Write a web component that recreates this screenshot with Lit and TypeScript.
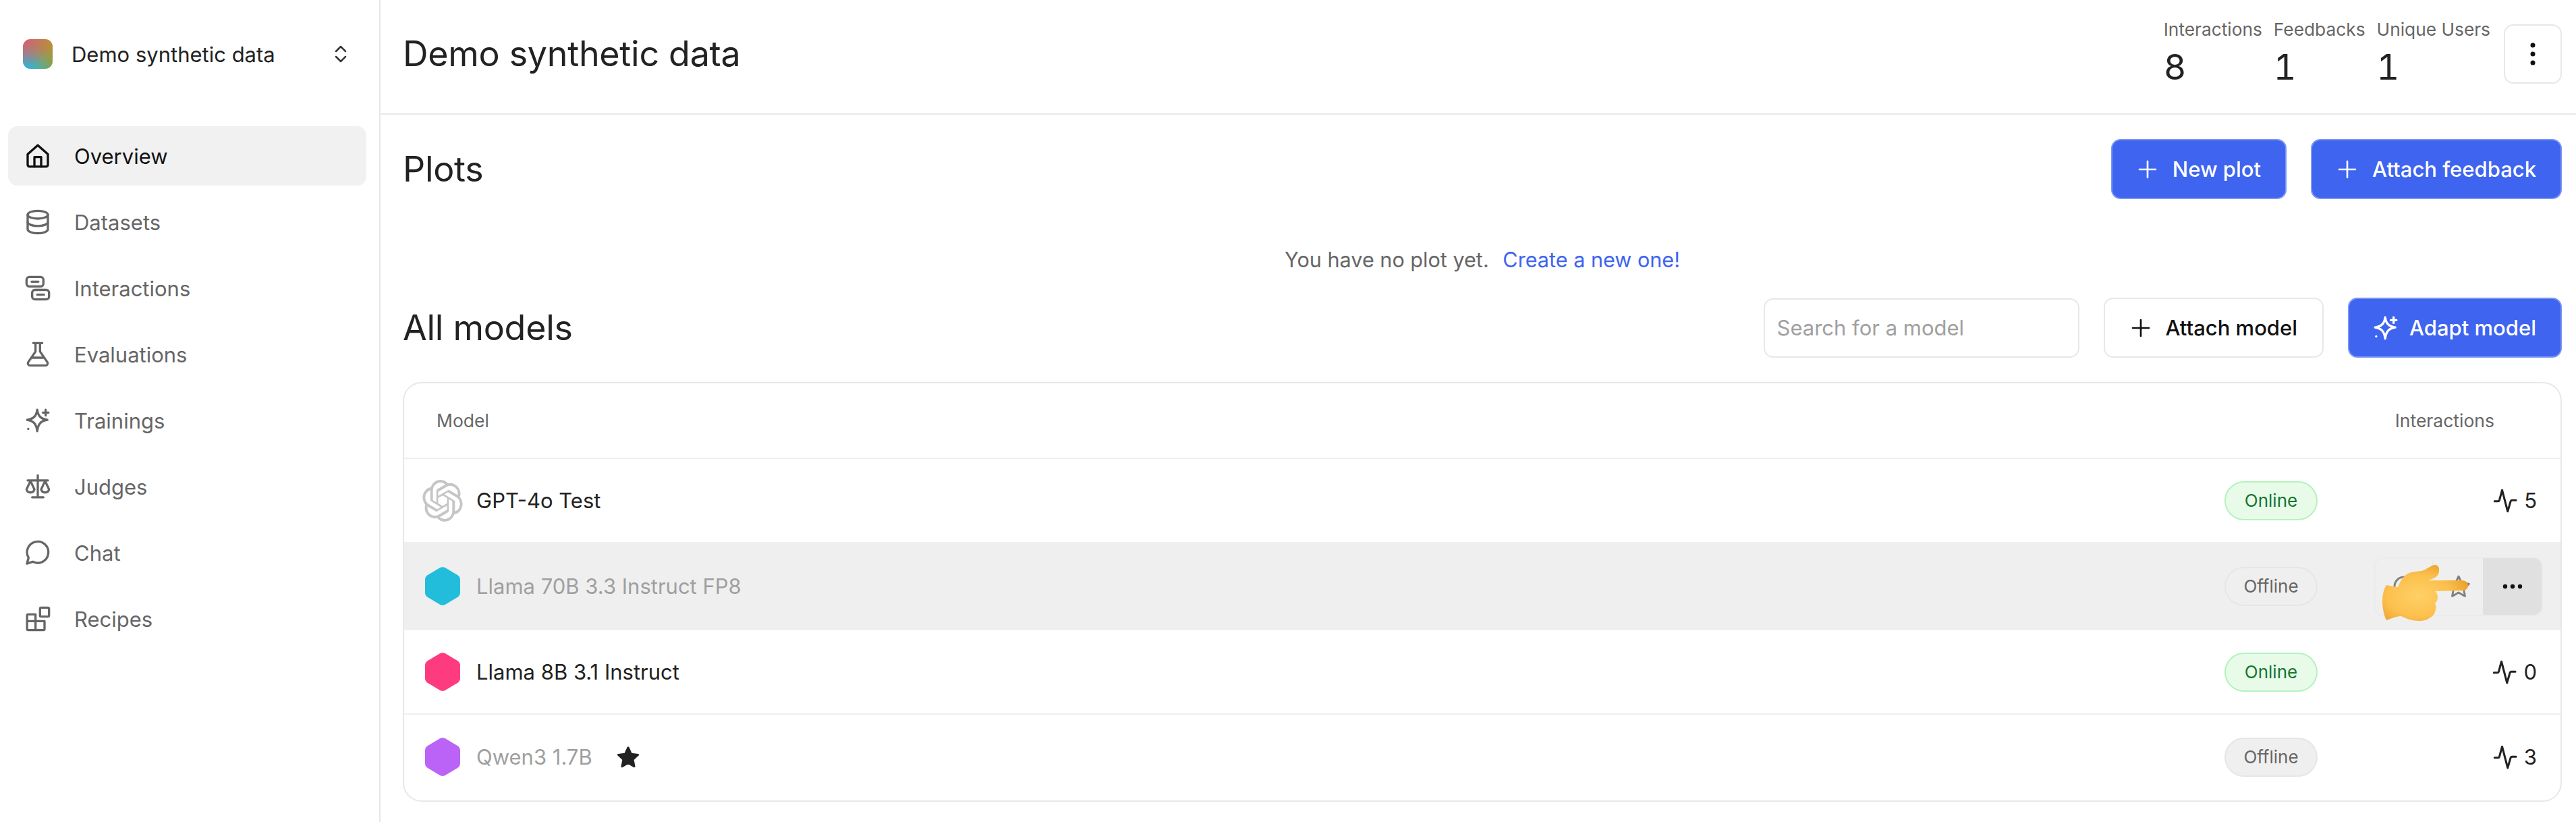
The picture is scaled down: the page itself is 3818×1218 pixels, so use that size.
import { LitElement, html, css, svg } from "lit";
import { customElement } from "lit/decorators.js";

const ic = (body: unknown, cls = "ic") => html`<svg class=${cls} viewBox="0 0 24 24" fill="none" stroke="currentColor" stroke-width="2" stroke-linecap="round" stroke-linejoin="round">${body}</svg>`;

const icons: Record<string, unknown> = {
  home: svg`<path d="M3 10.500 12 2.500l9 8V20a1.500 1.500 0 0 1-1.500 1.500h-15A1.500 1.500 0 0 1 3 20z"/><path d="M9 21.500V13h6v8.500"/>`,
  db: svg`<ellipse cx="12" cy="5.500" rx="9" ry="3.500"/><path d="M3 5.500v13c0 1.900 4 3.500 9 3.500s9-1.600 9-3.500v-13"/><path d="M3 12c0 1.900 4 3.500 9 3.500s9-1.600 9-3.500"/>`,
  inter: svg`<rect x="2" y="2" width="15" height="8.500" rx="2.500"/><rect x="7" y="13.500" width="15" height="8.500" rx="2.500"/><path d="M6.500 6.200h6M11.500 17.800h6"/>`,
  flask: svg`<path d="M8 2h8M10 2v7.500L3.500 19a2 2 0 0 0 1.700 3h13.600a2 2 0 0 0 1.700-3L14 9.500V2"/><path d="M7 15h10"/>`,
  spark: svg`<path d="M11.500 2.500c.8 5.500 3 8 9 9-6 1-8.200 3.500-9 10-.8-6.500-3-9-9-10 6-1 8.200-3.500 9-9z"/><path d="M19 2.500v5M16.500 5h5"/><path d="M3.500 19.500h.01"/>`,
  scale: svg`<path d="M12 2v19M7 21.500h10M3 6.500h18"/><path d="M5.500 7 2 14.500a3.600 3.600 0 0 0 7 0z"/><path d="M18.500 7 15 14.500a3.600 3.600 0 0 0 7 0z"/>`,
  chat: svg`<path d="M7.500 20A9.500 9.500 0 1 0 3.800 16.500L2.300 21.700z"/>`,
  blocks: svg`<rect x="14" y="2" width="8" height="8" rx="1"/><path d="M10 22V8H3.500A1 1 0 0 0 2.500 9v12a1 1 0 0 0 1 1H17a1 1 0 0 0 1-1V14H2.500"/>`,
  plus: svg`<path d="M12 3v18M3 12h18"/>`,
  pulse: svg`<path d="M1.500 12.500H5c.6 0 1.100-.4 1.300-1L9 1.500l5.500 21 3-10.200c.2-.5.600-.8 1.200-.8h4"/>`,
};

const nav = [
  ["Overview", "home"], ["Datasets", "db"], ["Interactions", "inter"], ["Evaluations", "flask"],
  ["Trainings", "spark"], ["Judges", "scale"], ["Chat", "chat"], ["Recipes", "blocks"],
];

const hex = (color: string) => html`<svg class="hex" viewBox="0 0 52 56" preserveAspectRatio="none"><path fill=${color} d="M22 1.300a8 8 0 0 1 8 0l18 10.500a8 8 0 0 1 4 6.900v18.600a8 8 0 0 1-4 6.900L30 54.700a8 8 0 0 1-8 0L4 44.200a8 8 0 0 1-4-6.900V18.700a8 8 0 0 1 4-6.900z"/></svg>`;

const openai = html`<svg class="oai" viewBox="0 0 24 24" preserveAspectRatio="none"><path fill="#c6c6c6" d="M22.280 9.820a5.980 5.980 0 0 0-.520-4.910 6.050 6.050 0 0 0-6.510-2.900A6.070 6.070 0 0 0 4.980 4.180a5.980 5.980 0 0 0-4 2.900 6.050 6.050 0 0 0 .750 7.100 5.980 5.980 0 0 0 .510 4.910 6.050 6.050 0 0 0 6.520 2.900A5.980 5.980 0 0 0 13.260 24a6.060 6.060 0 0 0 5.770-4.210 5.990 5.990 0 0 0 4-2.900 6.060 6.060 0 0 0-.750-7.070zM13.260 22.430a4.480 4.480 0 0 1-2.880-1.040l.140-.080 4.780-2.760a.79.79 0 0 0 .390-.680v-6.740l2.020 1.170a.07.07 0 0 1 .040.050v5.580a4.500 4.500 0 0 1-4.490 4.500zM3.600 18.300a4.470 4.470 0 0 1-.540-3.010l.140.090 4.780 2.760a.77.770 0 0 0 .780 0l5.840-3.370v2.330a.08.080 0 0 1-.030.060L9.740 19.950a4.500 4.500 0 0 1-6.140-1.650zM2.340 7.900a4.490 4.490 0 0 1 2.370-1.970V11.600a.77.770 0 0 0 .390.680l5.810 3.350-2.020 1.170a.08.080 0 0 1-.070 0l-4.830-2.790A4.500 4.500 0 0 1 2.340 7.870zm16.600 3.860L13.100 8.360 15.120 7.200a.08.080 0 0 1 .070 0l4.830 2.790a4.490 4.490 0 0 1-.680 8.100v-5.680a.79.79 0 0 0-.400-.670zm2.010-3.020-.140-.090-4.770-2.780a.78.780 0 0 0-.790 0L9.410 9.230V6.900a.07.070 0 0 1 .030-.060l4.830-2.790a4.500 4.500 0 0 1 6.680 4.660zM8.310 12.860l-2.020-1.160a.08.080 0 0 1-.040-.060V6.070a4.500 4.500 0 0 1 7.370-3.450l-.140.080L8.700 5.460a.79.790 0 0 0-.390.680zm1.100-2.370 2.600-1.500 2.610 1.500v3l-2.600 1.500-2.610-1.500z"/></svg>`;

const models = [
  { name: "GPT-4o Test", icon: openai, online: true, n: 5, dim: false, hover: false, star: false },
  { name: "Llama 70B 3.3 Instruct FP8", icon: hex("#22bddb"), online: false, n: 0, dim: true, hover: true, star: false },
  { name: "Llama 8B 3.1 Instruct", icon: hex("#ff3b7f"), online: true, n: 0, dim: false, hover: false, star: false },
  { name: "Qwen3 1.7B", icon: hex("#bb62f7"), online: false, n: 3, dim: true, hover: false, star: true },
];

const starPath = svg`<path d="M12 2.500l2.900 6.300 6.800.8-5 4.700 1.300 6.800-6-3.400-6 3.400 1.300-6.800-5-4.700 6.800-.8z"/>`;

@customElement("app-root")
export class AppRoot extends LitElement {
  static styles = css`
    :host { display: block; height: 1218px; font-family: Inter, "Noto Sans", sans-serif; color: #222; background: #fff; overflow: hidden; }
    * { box-sizing: border-box; }
    .app { display: flex; height: 1218px; }
    .side { width: 564px; flex: none; border-right: 2px solid #e8e8e8; padding: 0 19px 0 12px; }
    .brand { display: flex; align-items: center; height: 160px; padding: 0 26px 0 22px; font-size: 31px; }
    .logo { width: 44px; height: 44px; border-radius: 11px; margin-right: 28px; background: radial-gradient(circle at 0 0,#e05a6e,transparent 70%), radial-gradient(circle at 100% 0,#c28e2c,transparent 70%), radial-gradient(circle at 0 100%,#1cb9ee,transparent 70%), radial-gradient(circle at 100% 100%,#7ea54c,transparent 70%), #8c9a70; }
    .brand span { flex: 1; }
    .chev { width: 24px; height: 32px; color: #333; }
    .nav { display: flex; flex-direction: column; gap: 10px; margin-top: 27px; }
    .nav a { display: flex; align-items: center; gap: 34px; height: 88px; padding-left: 24px; border-radius: 14px; color: #666; font-size: 31px; }
    .nav a.on { background: #f1f1f1; color: #111; }
    .ic { width: 40px; height: 40px; flex: none; }
    .main { flex: 1; min-width: 0; }
    .top { display: flex; align-items: center; height: 170px; border-bottom: 2px solid #e8e8e8; padding: 0 21px 9px 33px; }
    .top h1, .bar h2 { font-weight: 400; margin: 0; font-size: 52px; flex: 1; letter-spacing: -.3px; }
    .stats { display: flex; gap: 17px; margin-right: 20px; }
    .stat small { display: block; font-size: 26.300px; color: #666; line-height: 32px; }
    .stat b { display: block; font-weight: 400; font-size: 52px; line-height: 62px; margin-top: 9px; font-variant-numeric: tabular-nums; }
    .kebab { width: 86px; height: 88px; border: 2px solid #e8e8e8; border-radius: 14px; display: grid; place-items: center; }
    .content { padding: 0 21px 0 33px; }
    .bar { display: flex; align-items: center; gap: 36px; height: 89px; }
    .bar.plots { margin-top: 36px; }
    .btn { display: inline-flex; align-items: center; justify-content: center; gap: 21px; height: 89px; padding: 0 36px; border-radius: 14px; font-size: 31px; font-weight: 500; background: #3e64f0; color: #fff; border: 2px solid #7a95f5; white-space: nowrap; }
    .btn.white { background: #fff; color: #111; border-color: #e8e8e8; padding: 0 37px; }
    .btn .ic { width: 32px; height: 32px; }
    .btn .ic.sp { width: 40px; height: 40px; margin: 0 -6px 0 -2px; }
    .empty { text-align: center; font-size: 30.600px; color: #666; margin: 72px 0 0; line-height: 36px; }
    .empty a { color: #3e64f0; margin-left: 12px; }
    .search { width: 468px; height: 88px; border: 2px solid #e8e8e8; border-radius: 14px; padding: 0 18px; display: flex; align-items: center; color: #a0a0a0; font-size: 31px; }
    .models { margin-top: 38px; }
    .table { margin-top: 36px; border: 2px solid #e8e8e8; border-radius: 28px; overflow: hidden; height: 622px; }
    .thead { display: flex; justify-content: space-between; align-items: center; height: 112px; padding: 0 98px 0 48px; font-size: 26.500px; color: #666; border-bottom: 2px solid #efefef; }
    .row { display: flex; align-items: center; height: 125px; padding: 0 26px 0 27px; font-size: 31px; border-bottom: 2px solid #efefef; }
    .row:last-child { border-bottom: 0; }
    .row.hover { background: #efefef; border-color: #efefef; height: 129px; position: relative; }
    .row.dim .name { color: #9f9f9f; }
    .name { margin-left: 20px; }
    .lead { width: 60px; display: grid; place-items: center; flex: none; }
    .hex { width: 52px; height: 57px; display: block; }
    .oai { width: 60px; height: 62px; display: block; }
    .star { width: 36px; height: 36px; margin-left: 35px; color: #222; }
    .pill { margin-left: auto; width: 138px; height: 58px; border-radius: 29px; display: grid; place-items: center; font-size: 26px; border: 2px solid #b5f2bd; background: #e8fbe9; color: #16752f; }
    .pill.off { background: transparent; border-color: #e6e6e6; color: #666; }
    .row:last-child .pill.off { background: #efefef; }
    .count { width: 334px; flex: none; display: flex; align-items: center; justify-content: flex-end; gap: 10px; font-size: 31px; padding-right: 9px; }
    .count svg { width: 36px; height: 36px; }
    .actions { width: 334px; flex: none; display: flex; justify-content: flex-end; }
    .grp { display: flex; width: 250px; height: 88px; border: 2px solid #ebebeb; border-radius: 14px; overflow: hidden; }
    .grp div { display: grid; place-items: center; color: #808080; }
    .grp div:nth-child(1) { width: 86px; border-right: 2px solid #ebebeb; }
    .grp div:nth-child(2) { width: 73px; }
    .grp div:nth-child(3) { flex: 1; background: #e0e0e0; color: #111; }
    .grp svg { width: 38px; height: 38px; }
    .grp svg.dots { width: 32px; height: 10px; }
    .hand { position: absolute; left: 2932px; top: 32px; width: 128px; height: 83px; }
  `;

  render() {
    return html`<div class="app">
      <aside class="side">
        <div class="brand"><i class="logo"></i><span>Demo synthetic data</span>
          <svg class="chev" viewBox="0 0 24 32" fill="none" stroke="currentColor" stroke-width="2.500" stroke-linecap="round" stroke-linejoin="round"><path d="M5 12l7-7 7 7M5 20l7 7 7-7"/></svg></div>
        <nav class="nav">${nav.map(([t, i], k) => html`<a class=${k === 0 ? "on" : ""}>${ic(icons[i])}${t}</a>`)}</nav>
      </aside>
      <main class="main">
        <header class="top"><h1>Demo synthetic data</h1>
          <div class="stats">
            <div class="stat"><small>Interactions</small><b>8</b></div>
            <div class="stat"><small>Feedbacks</small><b>1</b></div>
            <div class="stat"><small>Unique Users</small><b>1</b></div>
          </div>
          <div class="kebab"><svg width="10" height="36" viewBox="0 0 10 36" fill="#111"><circle cx="5" cy="5" r="3.500"/><circle cx="5" cy="18" r="3.500"/><circle cx="5" cy="31" r="3.500"/></svg></div>
        </header>
        <div class="content">
          <div class="bar plots"><h2>Plots</h2>
            <span class="btn">${ic(icons.plus)}New plot</span><span class="btn">${ic(icons.plus)}Attach feedback</span></div>
          <p class="empty">You have no plot yet. <a>Create a new one!</a></p>
          <div class="bar models"><h2>All models</h2>
            <div class="search">Search for a model</div>
            <span class="btn white">${ic(icons.plus)}Attach model</span>
            <span class="btn">${ic(icons.spark, "ic sp")}Adapt model</span></div>
          <section class="table">
            <div class="thead"><span>Model</span><span>Interactions</span></div>
            ${models.map((m) => html`<div class="row ${m.dim ? "dim" : ""} ${m.hover ? "hover" : ""}">
              <span class="lead">${m.icon}</span><span class="name">${m.name}</span>
              ${m.star ? html`<svg class="star" viewBox="0 0 24 24" fill="currentColor" stroke="currentColor" stroke-width="2" stroke-linejoin="round">${starPath}</svg>` : ""}
              <span class="pill ${m.online ? "" : "off"}">${m.online ? "Online" : "Offline"}</span>
              ${m.hover
                ? html`<div class="actions"><div class="grp">
                    <div><svg viewBox="0 0 38 38" fill="none" stroke="currentColor" stroke-width="3"><circle cx="19" cy="19" r="14"/></svg></div>
                    <div><svg viewBox="0 0 24 24" fill="none" stroke="currentColor" stroke-width="1.800" stroke-linejoin="round">${starPath}</svg></div>
                    <div><svg class="dots" viewBox="0 0 32 10" fill="currentColor"><circle cx="5" cy="5" r="3.200"/><circle cx="16" cy="5" r="3.200"/><circle cx="27" cy="5" r="3.200"/></svg></div>
                  </div></div>
                  <svg class="hand" viewBox="0 0 128 83"><defs><radialGradient id="h" cx=".42" cy=".55" r=".62"><stop offset="0" stop-color="#ffd066"/><stop offset=".6" stop-color="#fcc04d"/><stop offset="1" stop-color="#eb9f2a"/></radialGradient></defs><path fill="url(#h)" d="M6 30 23 33C26 25 30 18 36 14 42 10 50 10 58 9 66 7 71 1 78 0 82 0 85 4 84 9 84 14 81 17 78 19L68 23 118 23C123 23 127 26 127 30 127 35 124 38 119 38L78 39C81 41 82 45 82 48 82 52 80 55 78 58 80 61 80 64 79 66 78 72 75 76 71 78 66 82 60 83 54 83 45 83 36 80 28 76 22 76 14 79 6 82 3 76 0 65 0 54 0 45 2 36 6 30Z"/></svg>`
                : html`<div class="count">${ic(icons.pulse)}${m.n}</div>`}
            </div>`)}
          </section>
        </div>
      </main>
    </div>`;
  }
}
